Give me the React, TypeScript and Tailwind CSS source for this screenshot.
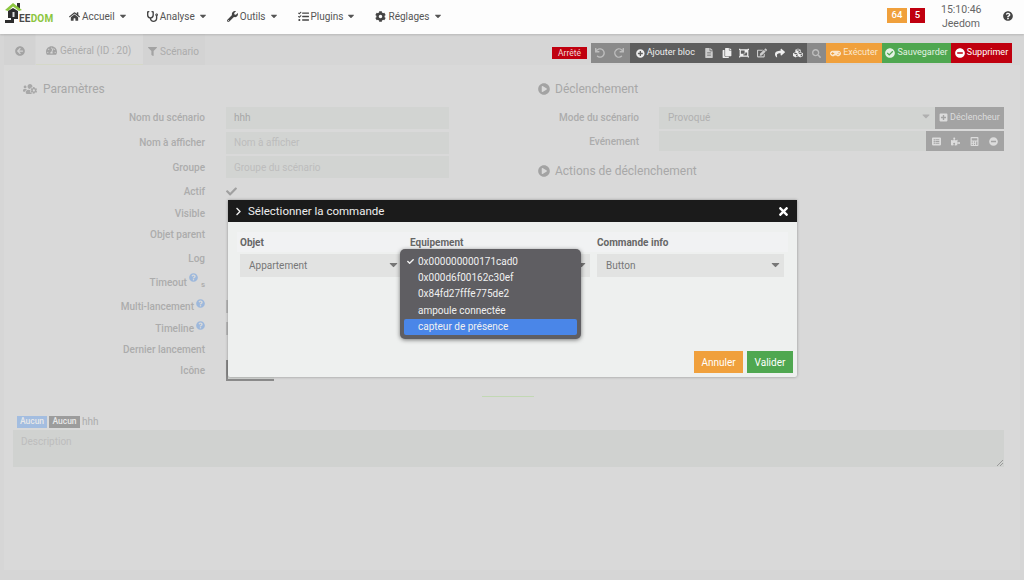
import {
  FaArrowCircleLeft, FaCalculator, FaCaretDown, FaCheck, FaCheckCircle, FaChevronRight, FaCog, FaCopy, FaCubes,
  FaEdit, FaFileAlt, FaFilter, FaGamepad, FaHome, FaListAlt, FaMinusCircle, FaObjectGroup, FaPlayCircle, FaPlusCircle,
  FaPlusSquare, FaPuzzlePiece, FaQuestionCircle, FaRedo, FaSearch, FaShare, FaStethoscope, FaTachometerAlt, FaTasks,
  FaTimes, FaUndo, FaUsersCog, FaWrench,
} from "react-icons/fa";
import type { ReactNode } from "react";

function Logo() {
  return (
    <div className="relative w-[54px] h-[34px] shrink-0">
      <svg width="26" height="26" viewBox="0 0 26 26" className="absolute left-0 top-0">
        <rect x="17" y="3" width="3" height="6" fill="#333" />
        <path d="M5 10 L13 3 L22 10 L19 11 L13 6.5 L8 11 Z" fill="#8cc63f" />
        <path d="M8 11 L13 8 L18 11 L18 19 L14 19 L14 23 L5 23 L5 20 L11 20 L11 18 L8 18 Z" fill="#2d2d2d" />
        <rect x="12.5" y="12" width="2" height="5" fill="#ddd" />
      </svg>
      <span className="absolute left-[19px] top-[13px] text-[10px] leading-[12px] font-bold tracking-[0.2px] text-[#4a4a4a]">
        EE<span className="text-[#8cc63f]">DOM</span>
      </span>
    </div>
  );
}

function NavItem({ icon, label, className }: { icon: ReactNode; label: string; className: string }) {
  return (
    <div className={`flex items-center text-[10px] text-[#555] mb-[2px] ${className}`}>
      <span className="w-[13px] text-[11px] text-[#444]">{icon}</span>
      {label}
      <FaCaretDown className="ml-[3px] text-[10px]" />
    </div>
  );
}

function Help({ className }: { className: string }) {
  return <FaQuestionCircle className={`text-[9px] text-[#9db8dc] ${className}`} />;
}

function Row({ label, h, children, help }: { label: ReactNode; h: string; children?: ReactNode; help?: boolean }) {
  return (
    <div className={`flex items-center ${h}`}>
      <div className="w-[201px] text-right text-[10px] font-medium text-[#acacac] flex justify-end items-center shrink-0">
        {label}
        {help && <Help className="ml-[2px] mb-[6px]" />}
      </div>
      <div className="ml-[21px] flex-1">{children}</div>
    </div>
  );
}

function Field({ text, dim }: { text: string; dim?: boolean }) {
  return (
    <div className={`w-[223px] h-[22px] bg-[#d2d4d2] px-2 flex items-center text-[10px] ${dim ? "text-[#bdbdbd]" : "text-[#a6a6a6]"}`}>
      {text}
    </div>
  );
}

function ToolIcon({ children }: { children: ReactNode }) {
  return <span className="w-[18.5px] flex justify-center text-[10px]">{children}</span>;
}

function Select({ label, value, className }: { label: string; value: string; className: string }) {
  return (
    <div className={className}>
      <div className="h-[20px] flex items-center text-[10px] font-bold text-[#666]">{label}</div>
      <div className="mt-[2px] h-[23px] bg-[#e2e3e2] flex items-center pl-[9px] pr-[2px] text-[10px] text-[#777]">
        {value}
        <FaCaretDown className="ml-auto text-[13px] text-[#777] mb-[3px]" />
      </div>
    </div>
  );
}

function CommandModal() {
  const options = ["0x000000000171cad0", "0x000d6f00162c30ef", "0x84fd27fffe775de2", "ampoule connectée", "capteur de présence"];
  return (
    <div className="absolute left-[228px] top-[200px] w-[569px] h-[177px] bg-[#eef0ef] rounded-b-[2px] shadow-[0_0_3px_rgba(0,0,0,0.35)] flex flex-col">
      <div className="h-[22px] bg-[#1b1b1b] flex items-center justify-between pl-[6px] pr-[7px] text-white">
        <div className="flex items-center text-[11.5px] text-[#eee] mt-[1px]">
          <FaChevronRight className="text-[9px] mr-[5px]" />
          Sélectionner la commande
        </div>
        <FaTimes className="text-[13px]" />
      </div>
      <div className="relative mt-[10px] mx-[9px] h-[44px]">
        <div className="absolute inset-x-0 top-0 h-[20px] bg-[#f1f2f3]" />
        <div className="relative flex pl-[3px]">
          <Select label="Objet" value="Appartement" className="w-[162px]" />
          <Select label="Equipement" value="" className="ml-[8px] w-[180px]" />
          <Select label="Commande info" value="Button" className="ml-[7px] w-[187px]" />
        </div>
        {/* native select popup */}
        <div className="absolute left-[163px] top-[17px] w-[181px] h-[90px] rounded-[5px] bg-[#5f5e62] shadow-[0_1px_4px_rgba(0,0,0,0.5)] px-[4px] pt-[4px] text-[10px] text-[#f0f0f0]">
          {options.map((o, i) => (
            <div
              key={o}
              className={`h-[16.4px] flex items-center pl-[14px] relative rounded-[2px] ${i === 4 ? "bg-[#4a86e8]" : ""}`}
            >
              {i === 0 && <FaCheck className="absolute left-[3px] text-[7px]" />}
              {o}
            </div>
          ))}
        </div>
      </div>
      <div className="mt-auto mb-[4px] mr-[4px] flex justify-end gap-[4px] text-[10px] text-white">
        <div className="w-[49px] h-[22px] bg-[#f0a03c] flex items-center justify-center">Annuler</div>
        <div className="w-[46px] h-[22px] bg-[#4fa750] flex items-center justify-center">Valider</div>
      </div>
    </div>
  );
}

export default function App() {
  return (
    <div className="relative w-[1024px] h-[580px] overflow-hidden bg-[#d6d6d6] font-['Roboto',sans-serif]">
      {/* top bar */}
      <header className="relative z-10 h-[34px] bg-[#fdfdfd] shadow-[0_1px_2px_rgba(0,0,0,0.15)] flex items-center">
        <Logo />
        <NavItem icon={<FaHome />} label="Accueil" className="ml-[15px]" />
        <NavItem icon={<FaStethoscope />} label="Analyse" className="ml-[19px]" />
        <NavItem icon={<FaWrench />} label="Outils" className="ml-[19px]" />
        <NavItem icon={<FaTasks />} label="Plugins" className="ml-[19px]" />
        <NavItem icon={<FaCog />} label="Réglages" className="ml-[19px]" />
        <div className="ml-auto mb-[3px] flex items-center text-[9.5px] font-medium text-white">
          <span className="w-[20px] h-[15px] bg-[#f0a03c] flex items-center justify-center">64</span>
          <span className="ml-[3px] w-[15px] h-[15px] bg-[#c0000f] flex items-center justify-center">5</span>
        </div>
        <div className="ml-[16px] w-[40px] text-center text-[10.5px] leading-[14.5px] text-[#666]">
          <div>15:10:46</div>
          <div>Jeedom</div>
        </div>
        <FaQuestionCircle className="ml-[22px] mr-[11px] mb-[3px] text-[10px] text-[#444]" />
      </header>

      {/* tabs and toolbar */}
      <div className="h-[31px] flex items-center pl-[4px] pr-[12px]">
        <div className="w-[31px] h-[31px] pt-[3px] bg-[#d3d3d3] flex items-center justify-center text-[#a3a3a3] text-[10px]">
          <FaArrowCircleLeft />
        </div>
        <div className="ml-[1px] w-[107px] h-[31px] pt-[3px] bg-[#d9d9d9] border-b border-[#d5d8c8] flex items-center pl-[10px] text-[10px] text-[#acacac]">
          <FaTachometerAlt className="mr-[3px] text-[#a3a3a3] text-[11px]" />
          Général (ID : 20)
        </div>
        <div className="w-[62px] h-[31px] pt-[3px] bg-[#d3d3d3] flex items-center pl-[5px] text-[10px] text-[#acacac]">
          <FaFilter className="mr-[3px] text-[#a3a3a3] text-[9px]" />
          Scénario
        </div>
        <div className="ml-auto mt-[7px] flex items-center h-[21px] text-[9px] text-white whitespace-nowrap">
          <span className="h-[12px] w-[35px] bg-[#c0000f] flex items-center justify-center text-[8.5px] text-[#f2d6d6]">Arrêté</span>
          <div className="ml-[4px] h-[20px] w-[39px] bg-[#8a8a8a] flex items-center text-[#bdbdbd]">
            <ToolIcon><FaUndo /></ToolIcon>
            <ToolIcon><FaRedo /></ToolIcon>
          </div>
          <div className="h-[20px] w-[177px] bg-[#5e5e5e] flex items-center text-[#eee] pl-[6px]">
            <FaPlusCircle className="mr-[2px] text-[9px]" />
            <span className="w-[55px] text-[9px]">Ajouter bloc</span>
            <ToolIcon><FaFileAlt className="text-[#ccc]" /></ToolIcon>
            <ToolIcon><FaCopy /></ToolIcon>
            <ToolIcon><FaObjectGroup /></ToolIcon>
            <ToolIcon><FaEdit className="text-[#ccc]" /></ToolIcon>
            <ToolIcon><FaShare /></ToolIcon>
            <ToolIcon><FaCubes /></ToolIcon>
          </div>
          <div className="h-[20px] w-[19px] bg-[#8a8a8a] flex items-center justify-center text-[#bdbdbd] text-[9px]">
            <FaSearch />
          </div>
          <div className="h-[20px] w-[56px] bg-[#f0a03c] flex items-center justify-center text-[#fbe7cd]">
            <FaGamepad className="mr-[2px] text-[11px]" />Exécuter
          </div>
          <div className="h-[20px] w-[69px] bg-[#4fa750] flex items-center justify-center text-[#e3f2e3]">
            <FaCheckCircle className="mr-[2px] text-[10px]" />Sauvegarder
          </div>
          <div className="h-[20px] w-[61px] bg-[#c0000f] flex items-center justify-center">
            <FaMinusCircle className="mr-[2px] text-[10px]" />Supprimer
          </div>
        </div>
      </div>

      {/* scenario form */}
      <main className="mx-[4px] h-[505px] bg-[#d9d9d9] flex flex-col">
        <div className="flex h-[331px]">
          <section className="w-[534px] pt-[14px]">
            <h2 className="h-[20px] pl-[19px] flex items-center text-[12px] text-[#a8a8a8]">
              <FaUsersCog className="mr-[6px] text-[14px]" />
              Paramètres
            </h2>
            <div className="mt-[6px]">
              <Row label="Nom du scénario" h="h-[25px]"><Field text="hhh" /></Row>
              <Row label="Nom à afficher" h="h-[25px]"><Field text="Nom à afficher" dim /></Row>
              <Row label="Groupe" h="h-[24px]"><Field text="Groupe du scénario" dim /></Row>
              <Row label="Actif" h="h-[24px]"><FaCheck className="text-[11px] text-[#a0a0a0]" /></Row>
              <Row label="Visible" h="h-[20px]" />
              <Row label="Objet parent" h="h-[22px]" />
              <Row label="Log" h="h-[26px]" />
              <Row
                h="h-[22px]"
                label={
                  <>
                    Timeout
                    <Help className="ml-[2px] mb-[10px]" />
                    <span className="ml-[3px] mt-[5px] text-[8px] leading-[10px]">s</span>
                  </>
                }
              />
              <Row label="Multi-lancement" h="h-[26px]" help>
                <div className="w-[13px] h-[13px] bg-[#b9b9b9]" />
              </Row>
              <Row label="Timeline" h="h-[18px]" help>
                <div className="w-[13px] h-[13px] bg-[#b9b9b9]" />
              </Row>
              <Row label="Dernier lancement" h="h-[24px]" />
              <Row label="Icône" h="h-[18px]">
                <div className="w-[48px] h-[21px] border-l-2 border-b-2 border-[#8a8a8a] bg-[#d2d4d2]" />
              </Row>
            </div>
          </section>
          <section className="flex-1 pt-[14px]">
            <h2 className="h-[20px] flex items-center text-[12px] text-[#a8a8a8]">
              <FaPlayCircle className="mr-[5px] text-[12px] text-[#a3a3a3]" />
              Déclenchement
            </h2>
            <div className="mt-[6px]">
              <div className="flex items-center h-[25px]">
                <div className="w-[101px] text-right text-[10px] font-medium text-[#acacac]">Mode du scénario</div>
                <div className="ml-[20px] w-[276px] h-[22px] bg-[#d2d4d2] flex items-center justify-between pl-[9px] pr-[3px] text-[10px] text-[#b0b0b0]">
                  Provoqué
                  <FaCaretDown className="text-[12px] mb-[4px]" />
                </div>
                <div className="w-[69px] h-[22px] bg-[#a3a3a3] flex items-center justify-center text-[9px] text-[#dcdcdc]">
                  <FaPlusSquare className="mr-[2px]" />
                  Déclencheur
                </div>
              </div>
              <div className="flex items-center h-[22px]">
                <div className="w-[101px] text-right text-[10px] font-medium text-[#acacac]">Evénement</div>
                <div className="ml-[20px] w-[267px] h-[20px] bg-[#d2d4d2]" />
                <div className="w-[78px] h-[20px] bg-[#a3a3a3] flex items-center justify-around px-[1px] text-[9px] text-[#dcdcdc]">
                  <FaListAlt /><FaPuzzlePiece /><FaCalculator /><FaMinusCircle />
                </div>
              </div>
            </div>
            <h2 className="mt-[9px] h-[20px] flex items-center text-[12px] text-[#a8a8a8]">
              <FaPlayCircle className="mr-[5px] text-[12px] text-[#a3a3a3]" />
              Actions de déclenchement
            </h2>
          </section>
        </div>

        <div className="ml-[478px] w-[52px] h-px bg-[#c2d8b4]" />

        <div className="mt-[17px] ml-[13px] flex items-center gap-[2px] text-[8.5px] font-medium text-[#e8e8e8]">
          <span className="w-[30px] h-[12px] bg-[#a3bde0] flex items-center justify-center">Aucun</span>
          <span className="w-[31px] h-[12px] bg-[#9c9c9c] flex items-center justify-center">Aucun</span>
          <span className="text-[10px] font-normal text-[#acacac]">hhh</span>
        </div>
        <div className="relative mt-[1px] ml-[9px] w-[991px] h-[37px] bg-[#d0d2d0] px-[8px] pt-[4px] text-[10px] text-[#bdbdbd]">
          Description
          <svg width="6" height="6" viewBox="0 0 6 6" className="absolute right-[1px] bottom-[1px]">
            <path d="M0 6 L6 0 M3 6 L6 3" stroke="#9a9a9a" strokeWidth="1" />
          </svg>
        </div>
      </main>

      <CommandModal />
    </div>
  );
}
